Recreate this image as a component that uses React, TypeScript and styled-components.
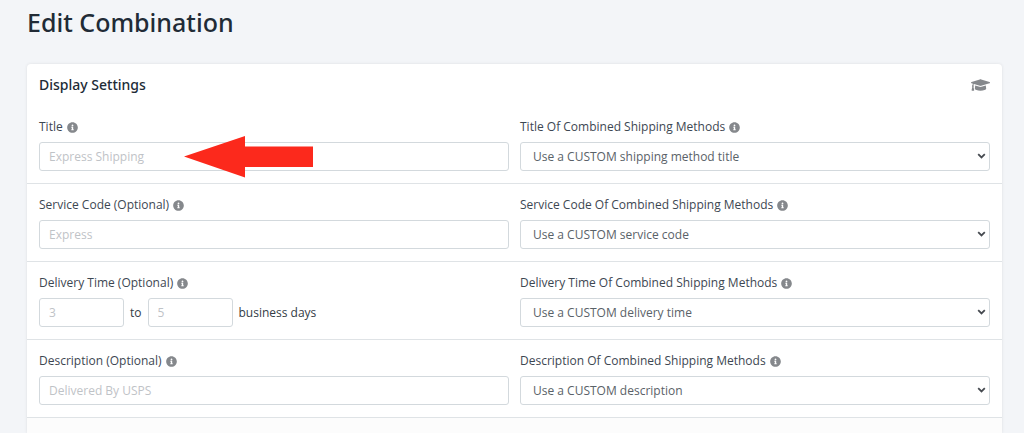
import React from 'react';
import styled, { createGlobalStyle } from 'styled-components';
import { FaGraduationCap, FaInfoCircle } from 'react-icons/fa';

const GlobalStyle = createGlobalStyle`
  *, *::before, *::after { box-sizing: border-box; }
  body {
    margin: 0;
    background: #f3f5f8;
    color: #3d4752;
    font: 400 12px/18px "Open Sans", "Noto Sans", sans-serif;
  }
`;

const Page = styled.main`
  display: flex;
  flex-direction: column;
  gap: 24px;
  padding: 4px 22px 0 27px;
`;

const PageTitle = styled.h1`
  margin: 0;
  color: #212b36;
  font-family: "Noto Sans", "Open Sans", sans-serif;
  font-size: 25px;
  font-weight: 500;
  line-height: 36px;
`;

const Card = styled.section`
  border-radius: 4px 4px 0 0;
  background: #fff;
  box-shadow: 0 0 3px rgba(63, 63, 68, 0.12);
`;

const CardHeader = styled.header`
  display: flex;
  align-items: center;
  justify-content: space-between;
  height: 42px;
  padding: 0 12px;
`;

const CardTitle = styled.h2`
  margin: 0;
  color: #212b36;
  font-family: "Noto Sans", "Open Sans", sans-serif;
  font-size: 14px;
  font-weight: 500;
  line-height: 20px;
`;

const HelpLink = styled.a`
  display: flex;
  color: #85888c;

  svg { width: 19px; height: 16px; }
`;

const Row = styled.div`
  display: grid;
  grid-template-columns: 1fr 1fr;
  gap: 11px;
  padding: 12px;
  border-bottom: 1px solid #dfe3e6;
`;

const Field = styled.div`
  position: relative;
  display: flex;
  flex-direction: column;
  gap: 6px;
  min-width: 0;
`;

const LabelLine = styled.div`
  display: flex;
  align-items: center;
  gap: 4px;
  height: 18px;

  svg { width: 11px; height: 11px; color: #85888c; }
`;

const TextInput = styled.input<{ $short?: boolean }>`
  width: ${(p) => (p.$short ? '85px' : '100%')};
  height: 29px;
  padding: 0 9px;
  border: 1px solid #d3d9dd;
  border-radius: 3px;
  background: #fff;
  color: #495057;
  font: inherit;

  &::placeholder { color: #bfc3c7; opacity: 1; }
`;

const SelectWrap = styled.div`
  position: relative;
  display: flex;
`;

const Select = styled.select`
  appearance: none;
  width: 100%;
  height: 29px;
  padding: 0 24px 0 12px;
  border: 1px solid #d3d9dd;
  border-radius: 3px;
  background: #fff;
  color: #5a6268;
  font: inherit;
`;

const Chevron = styled.svg`
  position: absolute;
  top: 11px;
  right: 4px;
  width: 9px;
  height: 6px;
  pointer-events: none;
`;

const Range = styled.div`
  display: flex;
  align-items: center;
  gap: 6px;
`;

const Unit = styled.span`
  color: #333c46;
`;

const Pointer = styled.svg`
  position: absolute;
  top: 18px;
  left: 145px;
  width: 130px;
  height: 42px;
  pointer-events: none;
`;

const CardFooter = styled.footer`
  height: 15px;
  background: #fcfcfc;
`;

function Label({ id, children }: { id: string; children: React.ReactNode }) {
  return (
    <LabelLine>
      <label htmlFor={id}>{children}</label>
      <FaInfoCircle aria-hidden="true" />
    </LabelLine>
  );
}

function SelectField({ id, label, option }: { id: string; label: string; option: string }) {
  return (
    <Field>
      <Label id={id}>{label}</Label>
      <SelectWrap>
        <Select id={id}>
          <option>{option}</option>
        </Select>
        <Chevron viewBox="0 0 9 6" aria-hidden="true">
          <path d="M1.2 1.2 L4.5 4.4 L7.8 1.2" fill="none" stroke="#464a50" strokeWidth="1.8" />
        </Chevron>
      </SelectWrap>
    </Field>
  );
}

export default function App() {
  return (
    <>
      <GlobalStyle />
      <Page>
        <PageTitle>Edit Combination</PageTitle>
        <Card>
          <CardHeader>
            <CardTitle>Display Settings</CardTitle>
            <HelpLink href="#help" aria-label="Help">
              <FaGraduationCap />
            </HelpLink>
          </CardHeader>
          <Row>
            <Field>
              <Label id="title">Title</Label>
              <TextInput id="title" placeholder="Express Shipping" />
              <Pointer viewBox="0 0 130 42" aria-hidden="true">
                <path d="M0 20.5 L61 0 V10.5 H129 V31 H61 V41.5 Z" fill="#fc291c" />
              </Pointer>
            </Field>
            <SelectField
              id="title-mode"
              label="Title Of Combined Shipping Methods"
              option="Use a CUSTOM shipping method title"
            />
          </Row>
          <Row>
            <Field>
              <Label id="code">Service Code (Optional)</Label>
              <TextInput id="code" placeholder="Express" />
            </Field>
            <SelectField
              id="code-mode"
              label="Service Code Of Combined Shipping Methods"
              option="Use a CUSTOM service code"
            />
          </Row>
          <Row>
            <Field>
              <Label id="days-min">Delivery Time (Optional)</Label>
              <Range>
                <TextInput $short id="days-min" placeholder="3" />
                <Unit>to</Unit>
                <TextInput $short aria-label="Maximum business days" placeholder="5" />
                <Unit>business days</Unit>
              </Range>
            </Field>
            <SelectField
              id="days-mode"
              label="Delivery Time Of Combined Shipping Methods"
              option="Use a CUSTOM delivery time"
            />
          </Row>
          <Row>
            <Field>
              <Label id="description">Description (Optional)</Label>
              <TextInput id="description" placeholder="Delivered By USPS" />
            </Field>
            <SelectField
              id="description-mode"
              label="Description Of Combined Shipping Methods"
              option="Use a CUSTOM description"
            />
          </Row>
          <CardFooter />
        </Card>
      </Page>
    </>
  );
}
